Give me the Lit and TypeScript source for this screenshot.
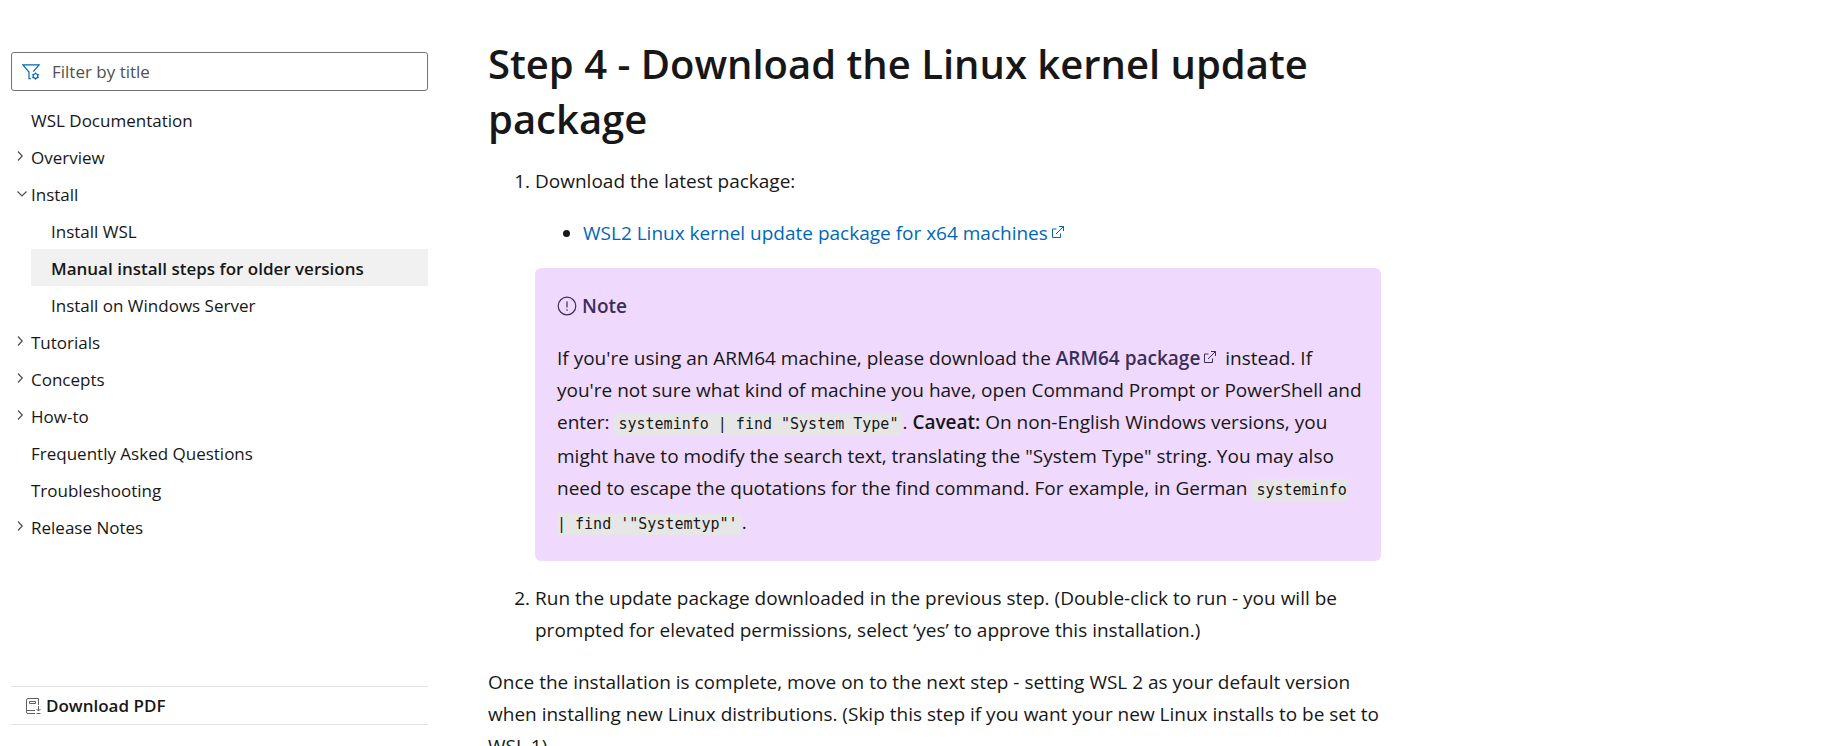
import { LitElement, html, svg, css, nothing } from "lit";
import { customElement } from "lit/decorators.js";
import { classMap } from "lit/directives/class-map.js";

interface TocItem {
  label: string;
  children?: TocItem[];
  expandable?: boolean;
  active?: boolean;
}

const TOC: TocItem[] = [
  { label: "WSL Documentation" },
  { label: "Overview", expandable: true },
  {
    label: "Install",
    expandable: true,
    children: [
      { label: "Install WSL" },
      { label: "Manual install steps for older versions", active: true },
      { label: "Install on Windows Server" },
    ],
  },
  { label: "Tutorials", expandable: true },
  { label: "Concepts", expandable: true },
  { label: "How-to", expandable: true },
  { label: "Frequently Asked Questions" },
  { label: "Troubleshooting" },
  { label: "Release Notes", expandable: true },
];

const chevronRight = svg`<svg class="chevron" viewBox="0 0 12 12" aria-hidden="true"><path d="M2 1.5 6.2 6 2 10.5" /></svg>`;
const chevronDown = svg`<svg class="chevron" viewBox="0 0 12 12" aria-hidden="true"><path d="M1.5 4.5 6 9l4.500-4.500" /></svg>`;
const external = svg`<svg class="external" viewBox="0 0 12 12" aria-hidden="true"><path d="M4.500 3H.5v8.500H8.500V7.500M7 .5h4.500V5M11.500.5 4 8" /></svg>`;

@customElement("docs-toc")
export class DocsToc extends LitElement {
  static styles = css`
    :host {
      display: flex;
      flex-direction: column;
      box-sizing: border-box;
      min-width: 0;
      height: 100vh;
      padding: 52px 0 21px;
    }
    .filter {
      display: flex;
      align-items: center;
      gap: 12px;
      box-sizing: border-box;
      height: 39px;
      padding: 0 10px;
      border: 1px solid #737373;
      border-radius: 3px;
    }
    .filter-icon {
      flex: none;
      width: 18px;
      height: 18px;
      fill: none;
      stroke: #0067b8;
      stroke-width: 1.3;
    }
    .field {
      flex: 1;
      min-width: 0;
      padding: 0;
      border: 0;
      outline: 0;
      background: none;
      color: #505050;
      font: inherit;
    }
    .field::placeholder {
      color: #505050;
      opacity: 1;
    }
    ul {
      margin: 0;
      padding: 0;
      list-style: none;
    }
    .tree {
      flex: 1;
      min-height: 0;
      margin-top: 10px;
      overflow: hidden;
    }
    .children {
      padding-left: 20px;
    }
    .row {
      display: grid;
      grid-template-columns: 20px 1fr;
      align-items: center;
      height: 37px;
      color: #171717;
      text-decoration: none;
      white-space: nowrap;
    }
    .row .label {
      grid-column: 2;
      padding-top: 2px;
    }
    .active {
      background: #f1f1f1;
      font-weight: 600;
    }
    .chevron {
      width: 12px;
      height: 12px;
      margin: 0 0 2px 5px;
      fill: none;
      stroke: #505050;
      stroke-width: 1.2;
    }
    .footer {
      border: solid #e3e3e3;
      border-width: 1px 0;
    }
    .download {
      display: flex;
      align-items: center;
      gap: 5px;
      width: 100%;
      height: 37px;
      padding: 0 15px;
      border: 0;
      background: none;
      color: #171717;
      font: inherit;
      font-weight: 600;
      cursor: pointer;
    }
    .pdf {
      width: 15px;
      height: 16px;
      fill: none;
      stroke: #606060;
    }
  `;

  private renderItem(item: TocItem): unknown {
    return html`<li>
      <a class=${classMap({ row: true, active: !!item.active })} href="#">
        ${item.expandable ? (item.children ? chevronDown : chevronRight) : nothing}
        <span class="label">${item.label}</span>
      </a>
      ${item.children
        ? html`<ul class="children">${item.children.map((c) => this.renderItem(c))}</ul>`
        : nothing}
    </li>`;
  }

  render() {
    return html`
      <label class="filter">
        <svg class="filter-icon" viewBox="0 0 20 20" aria-hidden="true">
          <path d="M10 17.500H7.800V10L1 2h18L12.500 9.500" />
          <circle cx="15" cy="14.500" r="2.600" />
          <path d="M15 10.500V12M15 17v1.500M11.500 12.500l1.400.8M17.200 15.700l1.400.8M11.500 16.500l1.400-.8M17.200 13.300l1.400-.8" />
        </svg>
        <input class="field" type="text" placeholder="Filter by title" aria-label="Filter by title" />
      </label>
      <ul class="tree">${TOC.map((item) => this.renderItem(item))}</ul>
      <div class="footer">
        <button class="download" type="button">
          <svg class="pdf" viewBox="0 0 15 16" aria-hidden="true">
            <path d="M12.500 7V.5H2a1.500 1.500 0 0 0-1.500 1.500v12A1.500 1.500 0 0 0 2 15.500h7M.5 12.500H9M3.500 3.500h6v2h-6zM12.500 8v5M10.500 11l2 2 2-2M10.500 15.500h4" />
          </svg>
          Download PDF
        </button>
      </div>
    `;
  }
}

@customElement("docs-note")
export class DocsNote extends LitElement {
  static styles = css`
    :host {
      display: block;
      padding: 22px 18px 21px 22px;
      border-radius: 6px;
      background: #efd9fd;
      color: #171717;
    }
    .title {
      display: flex;
      align-items: center;
      gap: 5px;
      margin: 0 0 20px;
      color: #3b2e58;
      font-weight: 600;
    }
    .info {
      width: 20px;
      height: 20px;
      fill: none;
      stroke: currentColor;
      stroke-width: 1.2;
    }
  `;

  render() {
    return html`
      <p class="title">
        <svg class="info" viewBox="0 0 20 20" aria-hidden="true">
          <circle cx="10" cy="10" r="8.800" />
          <path d="M10 5.500v6M10 13.200v1.600" />
        </svg>
        Note
      </p>
      <slot></slot>
    `;
  }
}

@customElement("app-root")
export class AppRoot extends LitElement {
  static styles = css`
    :host {
      display: grid;
      grid-template-columns: 417fr 893fr 406fr;
      column-gap: 60px;
      box-sizing: border-box;
      height: 100vh;
      padding-left: 11px;
      overflow: hidden;
      background: #fff;
      color: #171717;
      font-family: "Open Sans", "Noto Sans", sans-serif;
    }
    docs-toc {
      font-size: 17px;
    }
    main {
      min-width: 0;
      padding-top: 36px;
      font-size: 19px;
      line-height: 32px;
    }
    h2 {
      margin: 0 0 19px;
      font-size: 40px;
      font-weight: 600;
      line-height: 55px;
    }
    p {
      margin: 0;
    }
    ol {
      margin: 0 0 20px;
      padding-left: 47px;
    }
    ul {
      margin: 20px 0 19px;
      padding-left: 48px;
      list-style: disc;
    }
    .next {
      margin-top: 21px;
    }
    a {
      color: #0067b8;
      text-decoration: none;
    }
    .strong {
      color: #3b2e58;
      font-weight: 600;
    }
    strong {
      font-weight: 600;
    }
    .external {
      width: 12px;
      height: 12px;
      margin: 0 4px;
      vertical-align: 2px;
      fill: none;
      stroke: currentColor;
    }
    code {
      padding: 2px 4px;
      border-radius: 3px;
      background: #e6e6e6;
      font-family: "DejaVu Sans Mono", monospace;
      font-size: 15px;
      line-height: 31px;
    }
  `;

  render() {
    return html`
      <docs-toc></docs-toc>
      <main>
        <h2>Step 4 - Download the Linux kernel update package</h2>
        <ol>
          <li>
            <p>Download the latest package:</p>
            <ul>
              <li><a href="#">WSL2 Linux kernel update package for x64 machines${external}</a></li>
            </ul>
            <docs-note>
              <p>
                If you're using an ARM64 machine, please download the
                <a class="strong" href="#">ARM64 package${external}</a> instead. If you're not sure
                what kind of machine you have, open Command Prompt or PowerShell and enter:
                <code>systeminfo | find "System Type"</code>. <strong>Caveat:</strong> On non-English
                Windows versions, you might have to modify the search text, translating the "System
                Type" string. You may also need to escape the quotations for the find command. For
                example, in German <code>systeminfo | find '"Systemtyp"'</code>.
              </p>
            </docs-note>
          </li>
          <li class="next">
            Run the update package downloaded in the previous step. (Double-click to run - you will
            be prompted for elevated permissions, select ‘yes’ to approve this installation.)
          </li>
        </ol>
        <p>
          Once the installation is complete, move on to the next step - setting WSL 2 as your default
          version when installing new Linux distributions. (Skip this step if you want your new Linux
          installs to be set to WSL 1).
        </p>
      </main>
    `;
  }
}
